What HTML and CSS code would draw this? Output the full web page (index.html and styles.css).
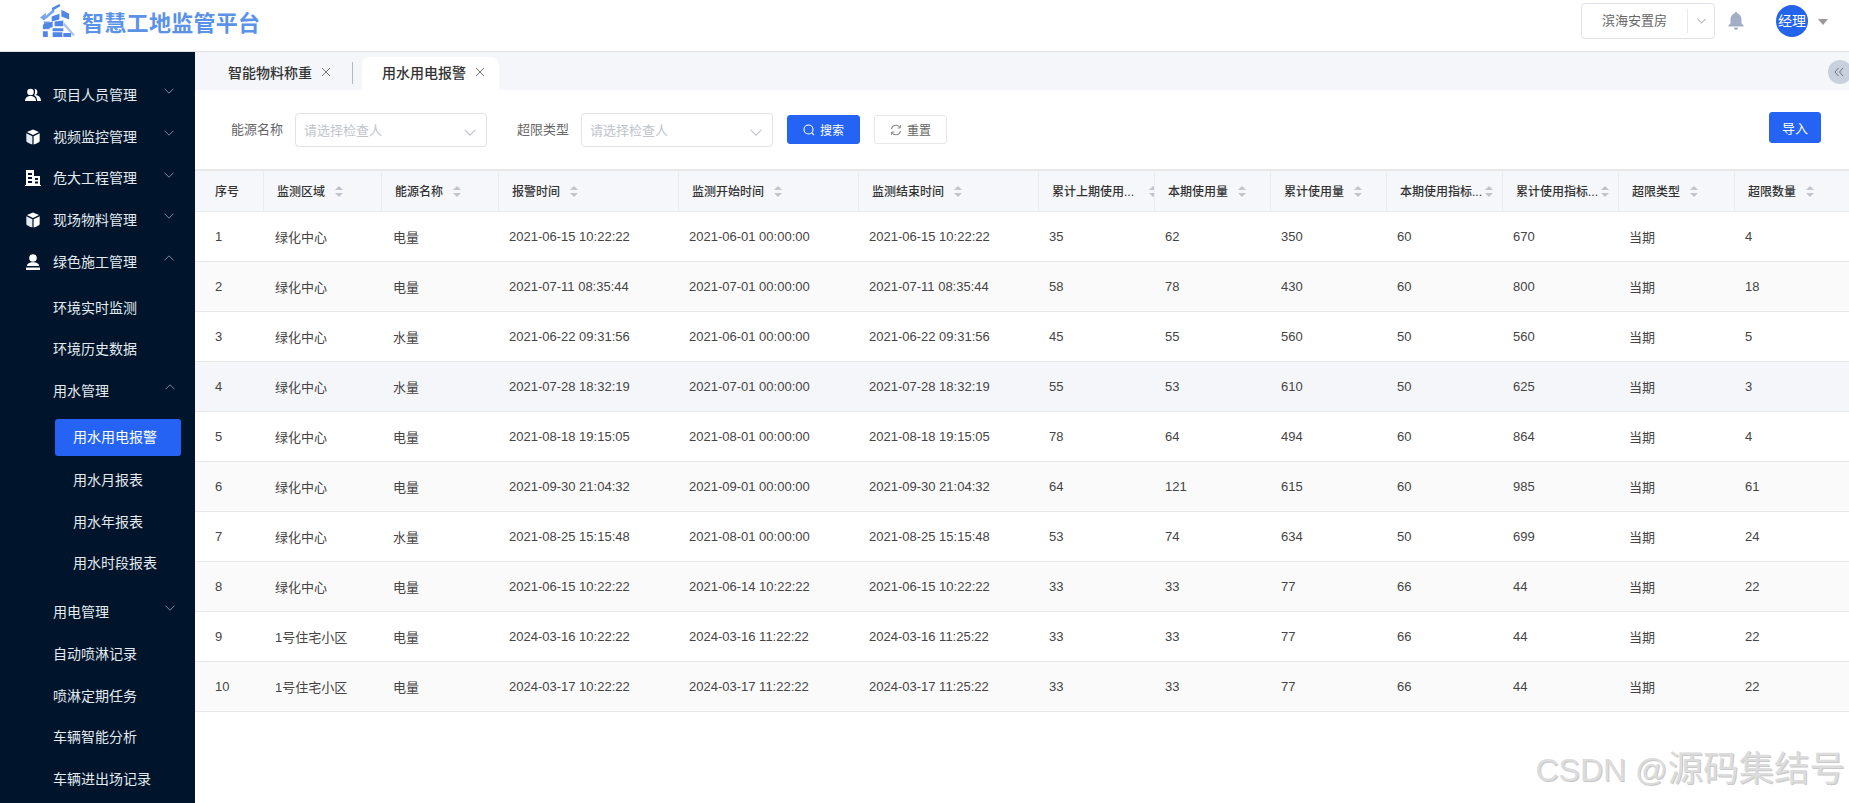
FILE: index.html
```html
<!DOCTYPE html>
<html lang="zh-CN">
<head>
<meta charset="utf-8">
<title>智慧工地监管平台</title>
<link rel="stylesheet" href="styles.css">
</head>
<body>
<svg class="defs" width="0" height="0" aria-hidden="true">
  <defs>
    <symbol id="chev-down" viewBox="0 0 10 6"><path d="M.5.7 5 5.2 9.5.7" fill="none" stroke="currentColor" stroke-width="1"/></symbol>
    <symbol id="chev-up" viewBox="0 0 10 6"><path d="M.5 5.3 5 .8l4.500 4.500" fill="none" stroke="currentColor" stroke-width="1"/></symbol>
    <symbol id="close" viewBox="0 0 10 10"><path d="M1 1l8 8M9 1 1 9" fill="none" stroke="currentColor" stroke-width="1"/></symbol>
    <symbol id="cube" viewBox="0 0 16 18"><path d="M8 .5 14.800 3.500 8 6.800 1.200 3.500Z" fill="#fff"/><path d="M.5 4.800 7.300 8.100V17.300C3.500 16.500.5 14.800.5 13.500Z" fill="#e4ebf2"/><path d="M15.500 4.800 8.700 8.100V17.300C12.500 16.500 15.500 14.800 15.500 13.500Z" fill="#fff"/></symbol>
  </defs>
</svg>

<header class="topbar">
  <div class="brand">
    <svg class="brand-icon" viewBox="0 0 36 34" aria-hidden="true">
      <path d="M0 14 6 9v3l8-7 1 3L4 17Z" fill="#7ba6ee"/>
      <path d="M12 4 20 0l1 2-8 5Z" fill="#4f86e8"/>
      <path d="M4 18h6v3H4ZM4 23h6v3H4Z" fill="#6c9cec"/>
      <path d="M12 13l8-3v6l-8 2Z" fill="#4f86e8"/>
      <path d="M22 6l8 4v6l-8-3Z" fill="#4f86e8"/>
      <path d="M3 21l10-3v6l-10 2Z" fill="#4f86e8"/>
      <path d="M15 18l9-1v6h-9Z" fill="#4f86e8"/>
      <path d="M3 28h5v6H3ZM13 25h11v3H13ZM13 29h10v5H13ZM24 30h8v4h-8Z" fill="#4f86e8"/>
      <path d="M25 19l11 13-2 1-10-11Z" fill="#a9c4f2"/>
    </svg>
    <span class="brand-name">智慧工地监管平台</span>
  </div>
  <div class="top-actions">
    <div class="project-select">
      <span class="project-name">滨海安置房</span>
      <span class="project-arrow"><svg class="chev-sm"><use href="#chev-down"/></svg></span>
    </div>
    <svg class="bell" viewBox="0 0 16 18" aria-hidden="true">
      <path d="M8 0c1 0 1.500.7 1.500 1.500C12 2.300 13.500 4.500 13.500 7.500V11L16 14.500H0L2.500 11V7.500C2.500 4.500 4 2.300 6.500 1.500 6.500.7 7 0 8 0Z" fill="currentColor"/>
      <path d="M6 15.500h4C10 17 9 18 8 18S6 17 6 15.500Z" fill="currentColor"/>
    </svg>
    <div class="avatar">经理</div>
    <span class="caret"></span>
  </div>
</header>

<div class="body-wrap">
  <aside class="sidebar">
    <ul class="menu">
      <li class="item">
        <svg class="item-icon" viewBox="0 0 16 14" aria-hidden="true"><circle cx="5.500" cy="4" r="3.300" fill="#fff"/><path d="M0 13c0-3.500 2.500-5 5.500-5s5.500 1.500 5.500 5Z" fill="#fff"/><path d="M9.500.8a3.300 3.300 0 0 1 1 6.300c3 .5 5.500 2 5.500 5.900h-3.800c0-2.800-1.300-4.800-3-5.800 1-1.600 1.300-4.500.3-6.400Z" fill="#fff"/></svg>
        <span>项目人员管理</span><svg class="chev"><use href="#chev-down"/></svg>
      </li>
      <li class="item">
        <svg class="item-icon" viewBox="0 0 16 18" aria-hidden="true"><use href="#cube"/></svg>
        <span>视频监控管理</span><svg class="chev"><use href="#chev-down"/></svg>
      </li>
      <li class="item">
        <svg class="item-icon" viewBox="0 0 16 16" aria-hidden="true"><path d="M1 0h8v6h6v9h1v1H0v-1h1ZM3 3v2h4V3ZM3 7v2h4V7ZM10 8v2h3V8ZM3 11v2h4v-2ZM10 11.500v2h3v-2Z" fill="#fff" fill-rule="evenodd"/></svg>
        <span>危大工程管理</span><svg class="chev"><use href="#chev-down"/></svg>
      </li>
      <li class="item">
        <svg class="item-icon" viewBox="0 0 16 18" aria-hidden="true"><use href="#cube"/></svg>
        <span>现场物料管理</span><svg class="chev"><use href="#chev-down"/></svg>
      </li>
      <li class="item">
        <svg class="item-icon" viewBox="0 0 16 16" aria-hidden="true"><circle cx="8" cy="4" r="3.800" fill="#fff"/><path d="M2 12c0-2.500 2.500-3.700 6-3.700s6 1.200 6 3.700Z" fill="#fff"/><path d="M1 13.500h14V16H1Z" fill="#fff"/></svg>
        <span>绿色施工管理</span><svg class="chev"><use href="#chev-up"/></svg>
      </li>
      <li class="sub-first item level2"><span>环境实时监测</span></li>
      <li class="item level2"><span>环境历史数据</span></li>
      <li class="item level2"><span>用水管理</span><svg class="chev"><use href="#chev-up"/></svg></li>
      <li class="active-wrap"><span class="active-pill">用水用电报警</span></li>
      <li class="item level3"><span>用水月报表</span></li>
      <li class="item level3"><span>用水年报表</span></li>
      <li class="item level3"><span>用水时段报表</span></li>
      <li class="item level2 after-group"><span>用电管理</span><svg class="chev"><use href="#chev-down"/></svg></li>
      <li class="item level2"><span>自动喷淋记录</span></li>
      <li class="item level2"><span>喷淋定期任务</span></li>
      <li class="item level2"><span>车辆智能分析</span></li>
      <li class="item level2"><span>车辆进出场记录</span></li>
    </ul>
  </aside>

  <main class="main">
    <nav class="tabs">
      <div class="tab">智能物料称重<svg class="tab-close"><use href="#close"/></svg></div>
      <span class="tab-divider"></span>
      <div class="tab tab-active">用水用电报警<svg class="tab-close"><use href="#close"/></svg></div>
      <button class="collapse" type="button" aria-label="收起">
        <svg viewBox="0 0 10 10" aria-hidden="true"><path d="M4.500 1 1 5l3.500 4M9 1 5.500 5 9 9" fill="none" stroke="currentColor" stroke-width="1"/></svg>
      </button>
    </nav>

    <section class="filters">
      <label class="f-label">能源名称</label>
      <div class="f-select"><span>请选择检查人</span><svg class="f-chev"><use href="#chev-down"/></svg></div>
      <label class="f-label f-label-2">超限类型</label>
      <div class="f-select"><span>请选择检查人</span><svg class="f-chev"><use href="#chev-down"/></svg></div>
      <button class="btn btn-primary btn-search" type="button">
        <svg class="btn-icon" viewBox="0 0 12 12" aria-hidden="true"><circle cx="5.500" cy="5.500" r="4.500" fill="none" stroke="currentColor" stroke-width="1.100"/><path d="M8.800 8.800 11 11" stroke="currentColor" stroke-width="1.100"/></svg>
        搜索
      </button>
      <button class="btn btn-plain" type="button">
        <svg class="btn-icon" viewBox="0 0 12 12" aria-hidden="true"><path d="M1.500 5A4.600 4.600 0 0 1 10 3.500M10.500 7A4.600 4.600 0 0 1 2 8.500" fill="none" stroke="currentColor" stroke-width="1.100"/><path d="M10.500 1v3h-3M1.500 11V8h3" fill="none" stroke="currentColor" stroke-width=".9"/></svg>
        重置
      </button>
      <button class="btn btn-primary btn-import" type="button">导入</button>
    </section>

    <table class="grid">
      <colgroup>
        <col class="c-idx"><col class="c-area"><col class="c-energy"><col class="c-time"><col class="c-time"><col class="c-time">
        <col class="c-num"><col class="c-num"><col class="c-num"><col class="c-num"><col class="c-num"><col class="c-num"><col class="c-last">
      </colgroup>
      <thead>
        <tr>
          <th class="th-idx"><div class="th-in">序号</div></th>
          <th><div class="th-in"><span>监测区域</span><i class="sort"></i></div></th>
          <th><div class="th-in"><span>能源名称</span><i class="sort"></i></div></th>
          <th><div class="th-in"><span>报警时间</span><i class="sort"></i></div></th>
          <th><div class="th-in"><span>监测开始时间</span><i class="sort"></i></div></th>
          <th><div class="th-in"><span>监测结束时间</span><i class="sort"></i></div></th>
          <th><div class="th-in"><span class="ell">累计上期使用...</span><i class="sort sort-far"></i></div></th>
          <th><div class="th-in"><span>本期使用量</span><i class="sort"></i></div></th>
          <th><div class="th-in"><span>累计使用量</span><i class="sort"></i></div></th>
          <th><div class="th-in"><span class="ell">本期使用指标...</span><i class="sort sort-near"></i></div></th>
          <th><div class="th-in"><span class="ell">累计使用指标...</span><i class="sort sort-near"></i></div></th>
          <th><div class="th-in"><span>超限类型</span><i class="sort"></i></div></th>
          <th><div class="th-in"><span>超限数量</span><i class="sort"></i></div></th>
        </tr>
      </thead>
      <tbody>
        <tr><td class="td-idx">1</td><td>绿化中心</td><td>电量</td><td>2021-06-15 10:22:22</td><td>2021-06-01 00:00:00</td><td>2021-06-15 10:22:22</td><td>35</td><td>62</td><td>350</td><td>60</td><td>670</td><td>当期</td><td>4</td></tr>
        <tr><td class="td-idx">2</td><td>绿化中心</td><td>电量</td><td>2021-07-11 08:35:44</td><td>2021-07-01 00:00:00</td><td>2021-07-11 08:35:44</td><td>58</td><td>78</td><td>430</td><td>60</td><td>800</td><td>当期</td><td>18</td></tr>
        <tr><td class="td-idx">3</td><td>绿化中心</td><td>水量</td><td>2021-06-22 09:31:56</td><td>2021-06-01 00:00:00</td><td>2021-06-22 09:31:56</td><td>45</td><td>55</td><td>560</td><td>50</td><td>560</td><td>当期</td><td>5</td></tr>
        <tr class="row-hover"><td class="td-idx">4</td><td>绿化中心</td><td>水量</td><td>2021-07-28 18:32:19</td><td>2021-07-01 00:00:00</td><td>2021-07-28 18:32:19</td><td>55</td><td>53</td><td>610</td><td>50</td><td>625</td><td>当期</td><td>3</td></tr>
        <tr><td class="td-idx">5</td><td>绿化中心</td><td>电量</td><td>2021-08-18 19:15:05</td><td>2021-08-01 00:00:00</td><td>2021-08-18 19:15:05</td><td>78</td><td>64</td><td>494</td><td>60</td><td>864</td><td>当期</td><td>4</td></tr>
        <tr><td class="td-idx">6</td><td>绿化中心</td><td>电量</td><td>2021-09-30 21:04:32</td><td>2021-09-01 00:00:00</td><td>2021-09-30 21:04:32</td><td>64</td><td>121</td><td>615</td><td>60</td><td>985</td><td>当期</td><td>61</td></tr>
        <tr><td class="td-idx">7</td><td>绿化中心</td><td>水量</td><td>2021-08-25 15:15:48</td><td>2021-08-01 00:00:00</td><td>2021-08-25 15:15:48</td><td>53</td><td>74</td><td>634</td><td>50</td><td>699</td><td>当期</td><td>24</td></tr>
        <tr><td class="td-idx">8</td><td>绿化中心</td><td>电量</td><td>2021-06-15 10:22:22</td><td>2021-06-14 10:22:22</td><td>2021-06-15 10:22:22</td><td>33</td><td>33</td><td>77</td><td>66</td><td>44</td><td>当期</td><td>22</td></tr>
        <tr><td class="td-idx">9</td><td>1号住宅小区</td><td>电量</td><td>2024-03-16 10:22:22</td><td>2024-03-16 11:22:22</td><td>2024-03-16 11:25:22</td><td>33</td><td>33</td><td>77</td><td>66</td><td>44</td><td>当期</td><td>22</td></tr>
        <tr><td class="td-idx">10</td><td>1号住宅小区</td><td>电量</td><td>2024-03-17 10:22:22</td><td>2024-03-17 11:22:22</td><td>2024-03-17 11:25:22</td><td>33</td><td>33</td><td>77</td><td>66</td><td>44</td><td>当期</td><td>22</td></tr>
      </tbody>
    </table>
  </main>
</div>
<div class="watermark">CSDN @<span class="wm-cjk">源码集结号</span></div>
</body>
</html>
```
FILE: styles.css
```css
* { box-sizing: border-box; }
html, body { margin: 0; height: 100%; overflow: hidden; }
body {
  font-family: "Liberation Sans", "Noto Sans CJK SC", sans-serif;
  color: #333;
  background: #fff;
  display: flex;
  flex-direction: column;
}
.defs { position: absolute; }
ul { list-style: none; margin: 0; padding: 0; }

/* top bar */
.topbar {
  height: 52px;
  flex: none;
  display: flex;
  align-items: center;
  justify-content: space-between;
  border-bottom: 1px solid #dcdfe4;
  background: #fff;
}
.brand { display: flex; align-items: center; margin-left: 40px; margin-top: -10px; }
.brand-icon { width: 35px; height: 33px; margin-right: 7px; }
.brand-name {
  font-family: "Noto Sans CJK SC", sans-serif;
  font-size: 22px;
  font-weight: 700;
  line-height: 30px;
  letter-spacing: .3px;
  color: #5a92e8;
  white-space: nowrap;
}
.top-actions { display: flex; align-items: center; margin-top: -9px; padding-right: 21px; }
.project-select {
  width: 134px;
  height: 36px;
  border: 1px solid #dfe3e9;
  border-radius: 4px;
  display: flex;
  align-items: center;
  color: #666;
  font-size: 13px;
}
.project-name { width: 105px; padding-left: 20px; line-height: 24px; white-space: nowrap; }
.project-arrow { height: 24px; flex: 1; border-left: 1px solid #e6e8ec; display: flex; align-items: center; justify-content: center; color: #888; }
.chev-sm { width: 9px; height: 6px; }
.bell { width: 16px; height: 18px; margin-left: 13px; color: #a2aec6; }
.avatar {
  width: 32px;
  height: 32px;
  margin-left: 32px;
  border-radius: 50%;
  background: #2463eb;
  color: #fff;
  font-size: 14px;
  line-height: 32px;
  text-align: center;
  white-space: nowrap;
}
.caret {
  margin-left: 10px;
  margin-top: 2px;
  width: 0;
  height: 0;
  border-left: 5px solid transparent;
  border-right: 5px solid transparent;
  border-top: 6px solid #999;
}

/* layout */
.body-wrap { flex: 1; min-height: 0; display: flex; }

/* sidebar */
.sidebar {
  width: 195px;
  flex: none;
  background: #00142b;
  overflow: hidden;
  padding-top: 22px;
  color: #e3eaf0;
  font-size: 14px;
}
.item {
  height: 41.75px;
  display: flex;
  align-items: center;
  padding-left: 25px;
  position: relative;
  white-space: nowrap;
  line-height: 20px;
}
.item-icon { width: 16px; height: 16px; margin-right: 12px; flex: none; }
.level2 { padding-left: 53px; }
.level3 { padding-left: 73px; }
.sub-first { margin-top: 4px; }
.after-group { margin-top: 7px; }
.chev {
  position: absolute;
  left: 164px;
  top: 14px;
  width: 10px;
  height: 6px;
  color: #7f8c9c;
}
.level2 .chev { left: 165px; }
.active-wrap { height: 47px; padding: 7px 14px 0 55px; }
.active-pill {
  display: block;
  height: 37px;
  line-height: 37px;
  padding-left: 18px;
  background: #2563f5;
  border-radius: 3px;
  color: #fff;
  white-space: nowrap;
}

/* main */
.main { flex: 1; min-width: 0; display: flex; flex-direction: column; }

.tabs {
  height: 38px;
  flex: none;
  display: flex;
  align-items: flex-end;
  background: #f4f6fa;
  position: relative;
  font-size: 14px;
  font-weight: 500;
}
.tab {
  height: 33px;
  display: flex;
  align-items: center;
  padding: 0 0 4px 33px;
  color: #333;
  white-space: nowrap;
}
.tab-close { width: 10px; height: 10px; margin-left: 9px; color: #777; }
.tab-divider { width: 1px; height: 22px; background: #b5b9c0; margin: 0 9px 6px 21px; }
.tab-active {
  width: 137px;
  padding-left: 20px;
  background: #fff;
  border-radius: 8px 8px 0 0;
}
.collapse {
  position: absolute;
  right: -3px;
  top: 8px;
  width: 24px;
  height: 24px;
  border: 0;
  padding: 0;
  border-radius: 50%;
  background: #c8d0dd;
  color: #6b7686;
  display: flex;
  align-items: center;
  padding-left: 6px;
}
.collapse svg { width: 10px; height: 10px; }

.filters {
  height: 79px;
  flex: none;
  display: flex;
  align-items: center;
  padding: 0 28px 0 36px;
  font-size: 13px;
}
.f-label { color: #666; margin-right: 12px; width: 52px; white-space: nowrap; margin-top: -2px; }
.f-label-2 { margin-left: 30px; }
.f-select {
  width: 192px;
  height: 34px;
  border: 1px solid #e0e3e8;
  border-radius: 4px;
  display: flex;
  align-items: center;
  justify-content: space-between;
  padding: 0 10px 0 8px;
  color: #c0c4cc;
}
.f-chev { width: 12px; height: 7px; margin-top: 6px; color: #c0c4cc; }
.btn {
  height: 29px;
  border-radius: 3px;
  font-family: inherit;
  font-size: 12px;
  display: flex;
  align-items: center;
  justify-content: center;
  padding: 0;
  white-space: nowrap;
}
.btn-icon { width: 12px; height: 12px; margin-right: 5px; }
.btn-primary { background: #2563f5; border: 1px solid #2563f5; color: #fff; }
.btn-search { width: 73px; margin-left: 14px; }
.btn-plain { width: 73px; margin-left: 14px; background: #fff; border: 1px solid #e4e7ec; color: #666; }
.btn-plain .btn-icon { color: #888; }
.btn-import { width: 52px; height: 31px; margin-left: auto; font-size: 13px; margin-top: -4px; }

/* table */
.grid {
  width: 100%;
  border-collapse: separate;
  border-spacing: 0;
  table-layout: fixed;
  border-top: 2px solid #e8e8e8;
  font-size: 13px;
}
.c-idx { width: 69px; }
.c-area { width: 118px; }
.c-energy { width: 117px; }
.c-time { width: 180px; }
.c-num { width: 116px; }
.c-last { width: 114px; }
th {
  height: 41px;
  background: #f5f7fa;
  border-bottom: 1px solid #e9ecf1;
  border-right: 1px solid #e9ecf1;
  padding: 0;
  font-size: 12px;
  font-weight: 500;
  text-align: left;
  color: #333;
}
th:last-child { border-right: 0; }
.th-in { display: flex; align-items: center; padding-left: 13px; overflow: hidden; white-space: nowrap; height: 40px; padding-bottom: 2px; }
.th-idx .th-in { padding-left: 20px; }
.ell { display: block; width: 84px; flex: none; }
.sort { flex: none; width: 7px; height: 11px; margin-left: 10px; position: relative; margin-top: 3px; }
.sort::before, .sort::after {
  content: "";
  position: absolute;
  left: 0;
  border-left: 4px solid transparent;
  border-right: 4px solid transparent;
}
.sort::before { top: 0; border-bottom: 4px solid #c0c4cc; }
.sort::after { bottom: 0; border-top: 4px solid #c0c4cc; }
.sort-near { margin-left: 1px; }
.sort-far { margin-left: 13px; }
td {
  height: 50px;
  padding: 0 11px;
  border-bottom: 1px solid #e8e8e8;
  color: #444;
  white-space: nowrap;
}
td:nth-child(n+4) { padding-left: 10px; }
td.td-idx { padding-left: 20px; }
tbody tr:nth-child(even) td { background: #fafafa; }
tbody tr.row-hover td { background: #f5f6fa; }

/* watermark */
.watermark {
  position: absolute;
  right: 4px;
  bottom: 11px;
  font-size: 32px;
  line-height: 44px;
  color: #dcdcdc;
  text-shadow: 1px 1px 0 #c8c8c8;
  white-space: nowrap;
}
.wm-cjk { font-family: "Noto Sans CJK SC", sans-serif; font-size: 35.5px; }
```
